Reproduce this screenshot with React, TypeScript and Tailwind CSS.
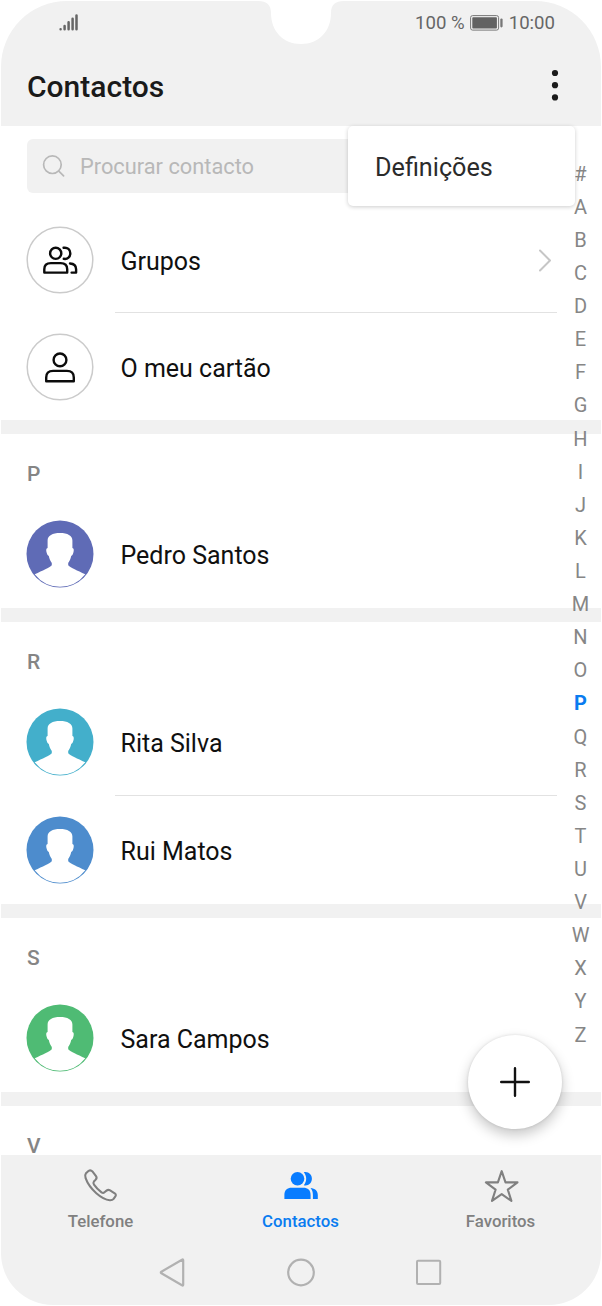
import type { ReactNode } from 'react';

type Contact = { name: string; color: string };

const SECTIONS: { letter: string; height: string; contacts: Contact[] }[] = [
  { letter: 'P', height: 'h-[188px]', contacts: [{ name: 'Pedro Santos', color: '#5f6bb6' }] },
  {
    letter: 'R',
    height: 'h-[296px]',
    contacts: [
      { name: 'Rita Silva', color: '#43afcb' },
      { name: 'Rui Matos', color: '#4d8ccd' },
    ],
  },
  { letter: 'S', height: 'h-[188px]', contacts: [{ name: 'Sara Campos', color: '#4fbb74' }] },
  { letter: 'V', height: 'h-[63px]', contacts: [] },
];

const ALPHABET = '#ABCDEFGHIJKLMNOPQRSTUVWXYZ'.split('');

function Avatar({ color }: { color: string }) {
  return (
    <svg width="68" height="68" viewBox="0 0 68 68" className="shrink-0">
      <circle cx="34" cy="34" r="33.5" fill={color} />
      <path
        fill="#fff"
        d="M21.6 28V20.5C21.6 15.5 26.5 13 34 13s12.4 2.5 12.4 7.5V28c1.6.2 1.6 2.5 1 4.6-.5 2-1.3 3.2-2.2 3.4-.5 3-1.8 5-3 7v2.2c2.5 2.7 9 5.2 17.1 9A32.8 32.8 0 0 1 34 66.8 32.8 32.8 0 0 1 8.7 54.2c8.1-3.8 14.6-6.3 17.1-9V43c-1.2-2-2.5-4-3-7-.9-.2-1.7-1.4-2.2-3.4-.6-2.1-.6-4.4 1-4.6Z"
      />
    </svg>
  );
}

// svg ring rather than a border, so the stroke keeps its 1.5px width
function Badge({ children }: { children: ReactNode }) {
  return (
    <svg width="68" height="68" viewBox="0 0 68 68" fill="none" className="shrink-0">
      <circle cx="34" cy="34" r="32.8" stroke="#cbcbcb" strokeWidth="1.5" />
      <g stroke="#0b0b0b" strokeWidth="2.4" strokeLinecap="round" strokeLinejoin="round">
        {children}
      </g>
    </svg>
  );
}

function Row({ icon, label, arrow, divider }: { icon: ReactNode; label: string; arrow?: boolean; divider?: boolean }) {
  return (
    <div className="relative flex flex-1 items-center pl-[25.2px]">
      <span className="flex w-[68px] justify-center">{icon}</span>
      <span className="ml-[26.3px] pt-[3px] text-[25px] leading-none text-[#101010]">{label}</span>
      {arrow && (
        <svg width="14" height="24" viewBox="0 0 14 24" className="mr-[49px] ml-auto" fill="none" stroke="#c6c6c6" strokeWidth="2">
          <path d="M2 2.5l10 10-10 10" strokeLinecap="round" strokeLinejoin="round" />
        </svg>
      )}
      {divider && <div className="absolute right-[44px] bottom-0 left-[114px] h-px bg-[#e2e2e2]" />}
    </div>
  );
}

function StatusBar() {
  return (
    <div className="flex h-[44px] items-center justify-between pr-[46px] pl-[58px] text-[#666]">
      <svg width="20" height="19" viewBox="0 0 20 19" className="mb-[1px]" stroke="#666" strokeWidth="2.5" strokeLinecap="round">
        <path d="M1.6 16.2v.1M5.6 13v3.3M9.6 9.2v7.1M13.6 5.7v10.6M17.5 2.5v13.8" />
      </svg>
      <div className="flex items-center text-[18.6px] leading-none">
        <span>100 %</span>
        <svg width="33" height="16" viewBox="0 0 33 16" className="mr-[6px] ml-[5px]">
          <rect x=".6" y=".6" width="28" height="14.5" rx="2" fill="none" stroke="#777" strokeWidth="1" />
          <rect x="2.3" y="2.2" width="24.6" height="11.3" rx=".8" fill="#626262" />
          <rect x="30.3" y="3.4" width="2.3" height="9" rx="1.1" fill="#777" />
        </svg>
        <span>10:00</span>
      </div>
    </div>
  );
}

function Tab({ label, active, children }: { label: string; active?: boolean; children: ReactNode }) {
  return (
    <div className={`flex flex-1 flex-col items-center ${active ? 'text-[#0a7cf0]' : 'text-[#808080]'}`}>
      <svg width="40" height="38" viewBox="0 0 40 38" className="mt-[12px]">
        {children}
      </svg>
      <span className="mt-[8px] mr-px text-[16.8px] leading-none font-medium">{label}</span>
    </div>
  );
}

export default function App() {
  return (
    <div className="h-[1306px] w-[602px] overflow-hidden bg-white p-px font-['Roboto',sans-serif]">
      <div className="relative flex h-[1304px] w-[600px] flex-col overflow-hidden rounded-t-[66px] rounded-b-[52px] bg-[#f1f1f1]">
        <header className="h-[124.5px] shrink-0">
          <StatusBar />
          <div className="flex h-[80px] items-center justify-between pr-[42px] pl-[26px]">
            <h1 className="pt-[4px] text-[30px] leading-[76px] font-medium text-[#1a1a1a]">Contactos</h1>
            <svg width="8" height="32" viewBox="0 0 8 32" fill="#1a1a1a">
              <circle cx="4" cy="4" r="3.1" />
              <circle cx="4" cy="16.2" r="3.1" />
              <circle cx="4" cy="28.4" r="3.1" />
            </svg>
          </div>
        </header>

        {/* camera notch */}
        <svg width="86" height="44" viewBox="0 0 86 44" className="absolute top-[-1px] left-[257px]">
          <path fill="#fff" d="M0 0v1c9 0 13 4 13 12 0 18 12 31 30 31s30-13 30-31C73 5 77 1 86 1V0Z" />
        </svg>

        <main className="relative h-[1029.5px] shrink-0 overflow-hidden bg-white">
          <div className="mt-[13.5px] mr-[44px] ml-[26px] flex h-[53.5px] items-center rounded-[6px] bg-[#f1f1f1] pl-[15px]">
            <svg width="24" height="24" viewBox="0 0 24 24" fill="none" stroke="#b8b8b8" strokeWidth="1.7">
              <circle cx="10.4" cy="10.7" r="8.8" />
              <path d="M16.8 17.1l4.8 4.7" strokeLinecap="round" />
            </svg>
            <span className="ml-[14px] pt-[3px] text-[21.8px] leading-none text-[#b8b8b8]">Procurar contacto</span>
          </div>

          <div className="mt-[13.5px] flex h-[214px] flex-col">
            <Row
              label="Grupos"
              arrow
              divider
              icon={
                <Badge>
                  <circle cx="29.7" cy="27.3" r="5.6" />
                  <path d="M18.3 46.6v-3.4c0-4 2.5-6.1 6.6-6.1h9.7c4.1 0 6.6 2.1 6.6 6.1v3.4Z" />
                  <path d="M37.6 21.8c4-.7 6.7 1.9 6.7 5.5s-2.7 6.2-6.5 5.5M44 37.5c3.9.2 6.1 2.2 6.1 5.7v3.4h-4.5" />
                </Badge>
              }
            />
            <Row
              label="O meu cartão"
              icon={
                <Badge>
                  <circle cx="34" cy="26.9" r="6.4" />
                  <path d="M20.2 48.2v-3.7c0-4.2 2.5-6.6 6.9-6.6h13.8c4.4 0 6.9 2.4 6.9 6.6v3.7Z" />
                </Badge>
              }
            />
          </div>

          {SECTIONS.map((section) => (
            <section key={section.letter} className={`${section.height} flex flex-col`}>
              <div className="h-[13.5px] shrink-0 bg-[#f1f1f1]" />
              <h2 className="h-[66.5px] shrink-0 pt-[12px] pl-[26px] text-[21px] leading-[56px] font-medium text-[#858585]">{section.letter}</h2>
              {section.contacts.map((c, i) => (
                <Row key={c.name} label={c.name} icon={<Avatar color={c.color} />} divider={i < section.contacts.length - 1} />
              ))}
            </section>
          ))}
        </main>

        {/* fast-scroll index */}
        <div className="absolute top-[156.7px] right-[6.5px] w-[28px] text-center text-[20px] text-[#868686]">
          {ALPHABET.map((l) => (
            <div key={l} className={`h-[33.12px] leading-[33px] ${l === 'P' ? 'font-bold text-[#0a7cf0]' : ''}`}>
              {l}
            </div>
          ))}
        </div>

        {/* overflow menu */}
        <div className="absolute top-[125px] right-[26px] flex h-[80px] w-[227px] items-center rounded-[5px] bg-white pt-[3px] pl-[27px] text-[25.2px] text-[#2b2b2b] shadow-[0_1px_4px_rgba(0,0,0,0.2)]">
          Definições
        </div>

        <button className="absolute top-[1033.5px] left-[467px] flex h-[94px] w-[94px] items-center justify-center rounded-full bg-white shadow-[0_6px_13px_rgba(0,0,0,0.22),0_0_3px_rgba(0,0,0,0.12)]">
          <svg width="30" height="30" viewBox="0 0 30 30" stroke="#111" strokeWidth="2.4" strokeLinecap="round">
            <path d="M15 1.2v27.6M1.2 15h27.6" />
          </svg>
        </button>

        <nav className="flex h-[85px] shrink-0">
          <Tab label="Telefone">
            <path
              fill="none"
              stroke="#808080"
              strokeWidth="2.1"
              strokeLinejoin="round"
              d="M5 6.2L7.4 4Q9.6 2.4 11.4 4.4l3.6 4.8q1.3 1.8-.3 3.4l-1.8 1.9q-1.1 1.5.1 3.1 3 4.3 7.5 7.8 1.7 1 3-.1l2-1.7q1.7-1.4 3.6-.2l4.6 2.9q2 1.6.5 3.4l-1.6 2.2q-1.3 1.6-3.8 1.4C21 32.5 8.7 22.6 4.6 11.2q-1-3.2.4-5Z"
            />
          </Tab>
          <Tab label="Contactos" active>
            <g fill="#087cff">
              <circle cx="16.5" cy="11.7" r="6.8" />
              <path d="M3.4 32v-4c0-4.8 2.8-7.2 7.3-7.2h11.6c4.5 0 7.3 2.4 7.3 7.2v4Z" />
              <path d="M22.8 5.2c4.6-1 8.1 2.3 8.1 6.5s-3.5 7.5-8.1 6.5c3.2-3.9 3.2-9.1 0-13ZM29.5 20.9c4.5.4 7.3 2.9 7.3 7.1v4h-4.9v-4c0-3.2-.7-5.4-2.4-7.1Z" />
            </g>
          </Tab>
          <Tab label="Favoritos">
            <path fill="none" stroke="#808080" strokeWidth="2.1" strokeLinejoin="round" d="M20.7 4.2l3.8 11.2 12-.1-9.7 7.3 3.6 11.3-9.7-6.8-9.7 6.8 3.6-11.3-9.7-7.3 12 .1Z" />
          </Tab>
        </nav>

        {/* system navigation */}
        <div className="flex h-[65px] shrink-0 items-start justify-center gap-[98px] pt-[17px]">
          <svg width="30" height="30" viewBox="0 0 30 30" fill="none" stroke="#b1b1b1" strokeWidth="2.2" strokeLinejoin="round">
            <path d="M25.2 3.3v24.4q0 1.3-1.2.6L3.4 16.3q-1.2-.8 0-1.6L24 2.7q1.2-.7 1.2.6Z" />
          </svg>
          <svg width="30" height="30" viewBox="0 0 30 30" fill="none" stroke="#b1b1b1" strokeWidth="2.2">
            <circle cx="15" cy="15.5" r="12.8" />
          </svg>
          <svg width="30" height="30" viewBox="0 0 30 30" fill="none" stroke="#b1b1b1" strokeWidth="2">
            <rect x="3" y="3.7" width="23.2" height="23.2" rx="1" />
          </svg>
        </div>
      </div>
    </div>
  );
}
